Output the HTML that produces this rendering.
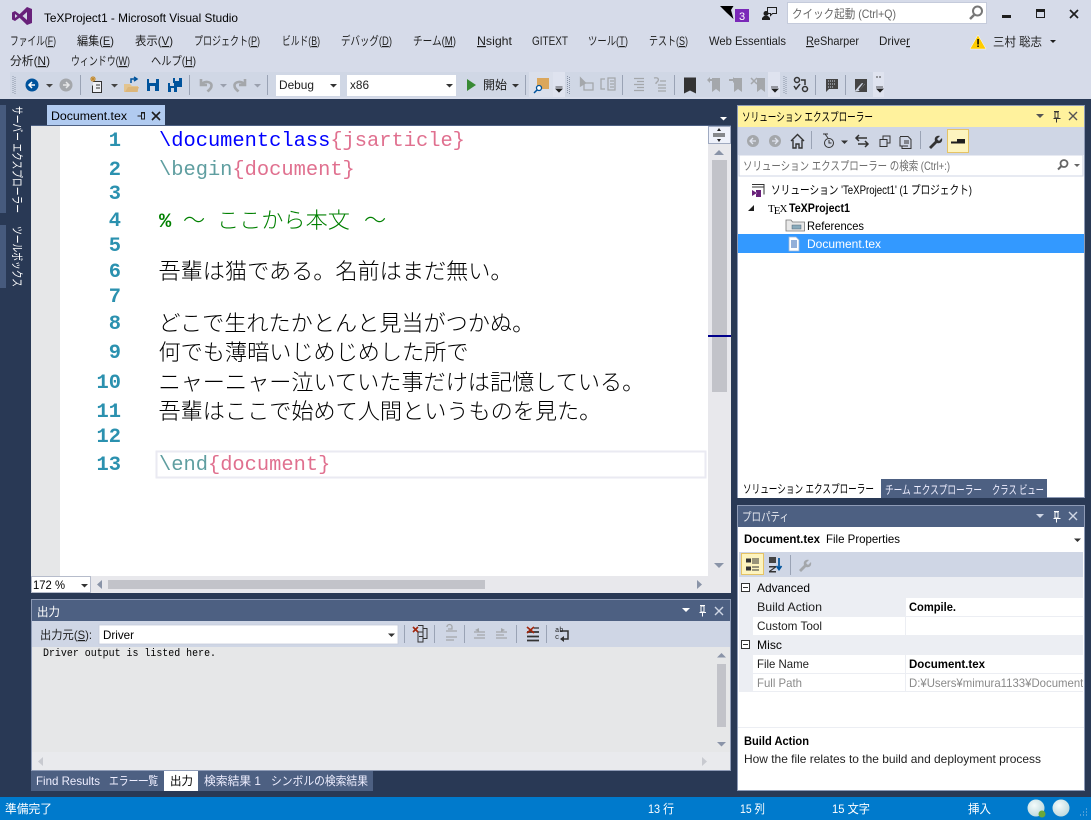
<!DOCTYPE html>
<html lang="ja"><head><meta charset="utf-8"><title>TeXProject1 - Microsoft Visual Studio</title>
<style>
html,body{margin:0;padding:0;background:#293955;width:1091px;height:820px;overflow:hidden}
svg{display:block}
text{font-family:"Liberation Sans","Noto Sans CJK JP",sans-serif;font-size:12px;fill:#1e1e1e;white-space:pre}
.w{fill:#fff}
.g{fill:#8a8a8a}
.b{font-weight:bold;fill:#000}
.k{fill:#000}
.m{font-family:"Liberation Mono","Noto Sans CJK JP",monospace;font-size:20.4px}
.c{font-family:"Noto Sans CJK JP",sans-serif;font-size:22.15px;fill:#000;font-weight:300}
.n{font-family:"Liberation Mono",monospace;font-size:20.4px;fill:#2b91af;text-anchor:end;font-weight:bold}
</style></head><body>
<svg width="1091" height="820" viewBox="0 0 1091 820" xmlns="http://www.w3.org/2000/svg">
<defs>
<radialGradient id="orb" cx="40%" cy="35%" r="70%"><stop offset="0" stop-color="#f4fbfb"/><stop offset="1" stop-color="#bcd8dc"/></radialGradient>
</defs>
<!-- chrome -->
<rect width="1091" height="99" fill="#d6dbe9"/>
<rect y="99" width="1091" height="698" fill="#293955"/>
<rect y="797" width="1091" height="23" fill="#007acc"/>
<!-- VS logo -->
<path d="M27 7 L32 9 V23 L27 25 L19.500 17.800 L15 21 L12 19.500 V12.500 L15 11 L19.500 14.200Z M15 14 V18 L17.500 16Z M27 12 L22.500 16 L27 20Z" fill="#68217a" fill-rule="evenodd"/>
<text x="44" y="22" textLength="194" lengthAdjust="spacingAndGlyphs" class="k">TeXProject1 - Microsoft Visual Studio</text>
<!-- title right -->
<path d="M720 6 H733.500 L731 10 L733.500 19 L727 13Z" fill="#000"/>
<rect x="735" y="9" width="14" height="13" fill="#7a28b8"/><text x="739" y="20" class="w" style="font-size:11px">3</text>
<circle cx="766" cy="13.500" r="2.500" fill="#1e1e1e"/><path d="M764 16 h4 l2 2 v2 h-8 v-2z" fill="#1e1e1e"/>
<path d="M767.500 7.500 h9 v6 h-4 l-2 2 v-2 h-3z" fill="none" stroke="#1e1e1e"/>
<rect x="787.500" y="2.500" width="199" height="21" fill="#fff" stroke="#c5cbdb"/>
<text x="792" y="18" textLength="104" lengthAdjust="spacingAndGlyphs" style="fill:#666">クイック起動 (Ctrl+Q)</text>
<circle cx="977.500" cy="11" r="4.500" fill="none" stroke="#777" stroke-width="2"/><path d="M974 15 L970 19" stroke="#777" stroke-width="2.500"/>
<rect x="1002" y="15" width="9" height="3" fill="#1e1e1e"/>
<rect x="1036.500" y="9.500" width="8" height="8" fill="none" stroke="#1e1e1e"/><rect x="1036" y="9" width="9" height="3" fill="#1e1e1e"/>
<path d="M1070 10 L1078 18 M1078 10 L1070 18" stroke="#1e1e1e" stroke-width="1.700"/>
<!-- menu row 1 -->
<text x="10" y="45" textLength="46" lengthAdjust="spacingAndGlyphs">ファイル(<tspan text-decoration="underline">F</tspan>)</text>
<text x="77" y="45" textLength="37" lengthAdjust="spacingAndGlyphs">編集(<tspan text-decoration="underline">E</tspan>)</text>
<text x="135" y="45" textLength="38" lengthAdjust="spacingAndGlyphs">表示(<tspan text-decoration="underline">V</tspan>)</text>
<text x="194" y="45" textLength="66" lengthAdjust="spacingAndGlyphs">プロジェクト(<tspan text-decoration="underline">P</tspan>)</text>
<text x="282" y="45" textLength="38" lengthAdjust="spacingAndGlyphs">ビルド(<tspan text-decoration="underline">B</tspan>)</text>
<text x="341" y="45" textLength="51" lengthAdjust="spacingAndGlyphs">デバッグ(<tspan text-decoration="underline">D</tspan>)</text>
<text x="413" y="45" textLength="43" lengthAdjust="spacingAndGlyphs">チーム(<tspan text-decoration="underline">M</tspan>)</text>
<text x="477" y="45" textLength="35" lengthAdjust="spacingAndGlyphs"><tspan text-decoration="underline">N</tspan>sight</text>
<text x="532" y="45" textLength="36" lengthAdjust="spacingAndGlyphs">GITEXT</text>
<text x="588" y="45" textLength="40" lengthAdjust="spacingAndGlyphs">ツール(<tspan text-decoration="underline">T</tspan>)</text>
<text x="649" y="45" textLength="39" lengthAdjust="spacingAndGlyphs">テスト(<tspan text-decoration="underline">S</tspan>)</text>
<text x="709" y="45" textLength="77" lengthAdjust="spacingAndGlyphs">Web Essentials</text>
<text x="806" y="45" textLength="53" lengthAdjust="spacingAndGlyphs"><tspan text-decoration="underline">R</tspan>eSharper</text>
<text x="879" y="45" textLength="31" lengthAdjust="spacingAndGlyphs">Drive<tspan text-decoration="underline">r</tspan></text>
<path d="M978 35 L986 49 H970Z" fill="#ffcc00" stroke="#fff" stroke-width=".5"/><rect x="977.300" y="39" width="1.500" height="5.500" fill="#000"/><rect x="977.300" y="45.500" width="1.500" height="1.500" fill="#000"/>
<text x="993" y="46" textLength="49" lengthAdjust="spacingAndGlyphs">三村 聡志</text>
<path d="M1050 40 h6 l-3 3z" fill="#1e1e1e"/>
<!-- menu row 2 -->
<text x="10" y="65" textLength="40" lengthAdjust="spacingAndGlyphs">分析(<tspan text-decoration="underline">N</tspan>)</text>
<text x="71" y="65" textLength="59" lengthAdjust="spacingAndGlyphs">ウィンドウ(<tspan text-decoration="underline">W</tspan>)</text>
<text x="151" y="65" textLength="45" lengthAdjust="spacingAndGlyphs">ヘルプ(<tspan text-decoration="underline">H</tspan>)</text>
<!-- toolbar -->
<rect x="10" y="72" width="543" height="25" fill="#d0d7e5"/>
<rect x="553" y="72" width="12" height="25" fill="#dfe3ef"/>
<rect x="565" y="72" width="203" height="25" fill="#d0d7e5"/>
<rect x="768" y="72" width="12" height="25" fill="#dfe3ef"/>
<rect x="780" y="72" width="93" height="25" fill="#d0d7e5"/>
<rect x="873" y="72" width="11" height="25" fill="#dfe3ef"/>
<path d="M13 76v18M15 77v17" stroke="#8a94a8" stroke-dasharray="1 1"/>
<path d="M567.500 76v18M569.500 77v17M784 76v18M786 77v17" stroke="#8a94a8" stroke-dasharray="1 1"/>
<circle cx="32" cy="85" r="6.500" fill="#00539c"/><path d="M29 85h6M32 82l-3 3 3 3" stroke="#fff" stroke-width="1.500" fill="none"/>
<path d="M46 84h7l-3.500 3.500z" fill="#444"/>
<circle cx="66" cy="85" r="6.500" fill="#a4a7ab"/><path d="M63 85h6M66 82l3 3-3 3" stroke="#e6e7e8" stroke-width="1.500" fill="none"/>
<path d="M80.500 75v20M189.500 75v20M267.500 75v20M525.500 75v20M622.500 75v20M674.500 75v20M815.500 75v20M845.500 75v20" stroke="#9aa3b5"/>
<!-- new project -->
<path d="M93.500 81.500h8v11h-9v-7" fill="#eef0f5" stroke="#333"/><path d="M96 85h4M96 88h4" stroke="#333"/><path d="M93 76v6M90 79h6M91 77l4 4M95 77l-4 4" stroke="#c48a2c"/>
<path d="M111 84h7l-3.500 3.500z" fill="#444"/>
<!-- open -->
<path d="M124 84h6l2 2h6v6h-14z" fill="#e3c48f"/><path d="M125 92l3-5h11l-2 5z" fill="#dcb67a"/><path d="M131 83v-4h5M134 77l3 2-3 2" stroke="#00539c" fill="none" stroke-width="1.500"/>
<!-- save -->
<path d="M147 79h12v12h-12z" fill="#00539c"/><rect x="149" y="79" width="7" height="4" fill="#d0d7e5"/><rect x="150" y="86" width="5" height="5" fill="#d0d7e5"/>
<path d="M168 83h9v9h-9z" fill="#00539c"/><rect x="170" y="83" width="4" height="3" fill="#d0d7e5"/><rect x="171" y="88" width="3" height="4" fill="#d0d7e5"/>
<path d="M173 78h9v9h-5v-4h-4z" fill="#00539c"/><rect x="175" y="78" width="4" height="3" fill="#d0d7e5"/>
<!-- undo redo -->
<path d="M201 79v6h6M201.500 84.500c3-4 10-3 10 1 0 3-2 4-4 6" fill="none" stroke="#a4a7ab" stroke-width="2.600"/>
<path d="M220 84h7l-3.500 3.500z" fill="#9aa0ad"/>
<path d="M245 79v6h-6M244.500 84.500c-3-4-10-3-10 1 0 3 2 4 4 6" fill="none" stroke="#a4a7ab" stroke-width="2.600"/>
<path d="M254 84h7l-3.500 3.500z" fill="#9aa0ad"/>
<!-- combos -->
<rect x="276" y="75" width="64" height="21" fill="#fff"/><text x="279" y="89" textLength="35" lengthAdjust="spacingAndGlyphs">Debug</text><path d="M330 84h7l-3.500 3.500z" fill="#333"/>
<rect x="347" y="75" width="109" height="21" fill="#fff"/><text x="350" y="89" textLength="19" lengthAdjust="spacingAndGlyphs">x86</text><path d="M446 84h7l-3.500 3.500z" fill="#333"/>
<path d="M467 79 L476 85 L467 91Z" fill="#388a34"/>
<text x="483" y="89" textLength="24" lengthAdjust="spacingAndGlyphs">開始</text>
<path d="M512 84h7l-3.500 3.500z" fill="#333"/>
<rect x="529" y="72" width="24" height="25" fill="#dadfeb"/>
<rect x="537" y="78" width="12" height="11" fill="#dba75c"/>
<circle cx="539" cy="88" r="2.500" fill="#fff" stroke="#00539c" stroke-width="1.300"/><path d="M537 90l-3 3" stroke="#00539c" stroke-width="1.500"/>
<path d="M555.500 87h7M556 89h6l-3 3z" stroke="#1e1e1e" fill="#1e1e1e" stroke-width=".8"/>
<!-- disabled icons -->
<g fill="none" stroke="#a4a7ab" stroke-width="1.300">
<path d="M584 83h9v7h-9z"/><path d="M580.500 78v8l5-3z" fill="#a4a7ab"/>
<path d="M605 79h-4v10h4M608 78h7v12h-7zM610 81h4M610 84h4M610 87h4"/>
<path d="M634 78.500h10M637 81.500h7M634 84.500h10M637 87.500h7M634 90.500h10"/>
<path d="M654 78c4-1 5 1 4 3l-2 2v1M660 81h6M658 85h8M658 88h8M658 91h8"/>
</g>
<path d="M684 77.500h12v16l-6-3-6 3z" fill="#333"/>
<g fill="#a4a7ab">
<path d="M712 78h8v14l-4-3-4 3zM707 80l3-3v2h2v2h-2v2z"/>
<path d="M734 78h8v14l-4-3-4 3zM729 79h4v-2l3 3-3 3v-2h-4z"/>
<path d="M757 78h8v14l-4-3-4 3z"/><path d="M751 78l6 6M757 78l-6 6" stroke="#a4a7ab" stroke-width="1.500"/>
</g>
<path d="M771 87h7M772 89h6l-3 3z" stroke="#1e1e1e" fill="#1e1e1e" stroke-width=".8"/>
<!-- right toolbar icons -->
<circle cx="797" cy="80" r="2.500" fill="none" stroke="#333" stroke-width="1.500"/><circle cx="805" cy="89" r="2.500" fill="none" stroke="#333" stroke-width="1.500"/>
<path d="M794 86l2 3 4-5M801 80h4v5" fill="none" stroke="#333" stroke-width="1.500"/>
<path d="M826 79h12v10h-9l-3 3z" fill="#444"/><path d="M828 81h8M828 84h8M828 87h6" stroke="#d0d7e5" stroke-dasharray="1 1"/>
<path d="M855 79h12v13h-12l0-4z" fill="#444"/><path d="M854 92l5-6 3-3 3 1-6 7z" fill="#d0d7e5"/><path d="M859 90l7-9" stroke="#444" stroke-width="1.500"/>
<path d="M877 76v2M880 76v2" stroke="#444"/>
<path d="M876 87h7M877 89h6l-3 3z" stroke="#1e1e1e" fill="#1e1e1e" stroke-width=".8"/>
<!-- left autohide -->
<rect x="0" y="105" width="6" height="108" fill="#465a7d"/>
<rect x="0" y="225" width="6" height="63" fill="#465a7d"/>
<text transform="translate(13,106) rotate(90)" x="0" y="0" textLength="107" lengthAdjust="spacingAndGlyphs" class="w">サーバー エクスプローラー</text>
<text transform="translate(13,226) rotate(90)" x="0" y="0" textLength="61" lengthAdjust="spacingAndGlyphs" class="w">ツールボックス</text>
<!-- doc tab -->
<rect x="47" y="105" width="118" height="21" fill="#b1cbf0"/>
<rect x="31" y="125" width="700" height="2" fill="#4d6082"/>
<text x="51" y="120" textLength="76" lengthAdjust="spacingAndGlyphs" class="k">Document.tex</text>
<path d="M137.500 116h4M141.500 113v6h3v-6zM141 112.500h4" fill="none" stroke="#1e1e1e"/>
<path d="M152 112l8 8M160 112l-8 8" stroke="#1e1e1e" stroke-width="1.600"/>
<path d="M720 117h7l-3.500 3.500z" fill="#fff"/>
<!-- editor -->
<rect x="31" y="126" width="677" height="450" fill="#fff"/>
<rect x="31" y="126" width="29" height="450" fill="#e6e7e8"/>
<rect x="156.500" y="451.500" width="549" height="26" fill="none" stroke="#eaeaf2" stroke-width="2"/>
<text x="121" y="146" class="n">1</text><text x="121" y="175" class="n">2</text><text x="121" y="199" class="n">3</text><text x="121" y="226" class="n">4</text><text x="121" y="251" class="n">5</text><text x="121" y="277" class="n">6</text><text x="121" y="302" class="n">7</text><text x="121" y="329" class="n">8</text><text x="121" y="358" class="n">9</text><text x="121" y="388" class="n">10</text><text x="121" y="417" class="n">11</text><text x="121" y="442" class="n">12</text><text x="121" y="470" class="n">13</text>
<text x="159" y="146" class="m" style="fill:#0000ff">\documentclass<tspan style="fill:#e0708f">{jsarticle}</tspan></text>
<text x="159" y="175" class="m" style="fill:#5f9ea0">\begin<tspan style="fill:#e0708f">{document}</tspan></text>
<text x="159" y="227" class="m" style="fill:#008000;font-weight:bold">%</text>
<text x="183" y="228" class="c" style="fill:#008000">～</text>
<text x="217" y="228" class="c" style="fill:#008000">ここから本文</text>
<text x="364" y="228" class="c" style="fill:#008000">～</text>
<text x="158.500" y="279" class="c">吾輩は猫である。名前はまだ無い。</text>
<text x="158.500" y="331" class="c">どこで生れたかとんと見当がつかぬ。</text>
<text x="158.500" y="360" class="c">何でも薄暗いじめじめした所で</text>
<text x="158.500" y="390" class="c">ニャーニャー泣いていた事だけは記憶している。</text>
<text x="158.500" y="419" class="c">吾輩はここで始めて人間というものを見た。</text>
<text x="159" y="470" class="m" style="fill:#5f9ea0">\end<tspan style="fill:#e0708f">{document}</tspan></text>
<!-- v scroll -->
<rect x="708" y="126" width="23" height="467" fill="#e8e8ec"/>
<rect x="708.500" y="126.500" width="22" height="17" fill="#eef1fa" stroke="#8c9ab5" stroke-width=".8"/>
<path d="M713 134h12M713 136h12" stroke="#1e1e1e"/><path d="M717 131h4l-2-3zM717 139h4l-2 3z" fill="#1e1e1e"/>
<path d="M714 155l5-5 5 5z" fill="#8a94a8"/>
<rect x="712" y="160" width="15" height="232" fill="#c2c3c9"/>
<rect x="708" y="335" width="23" height="2" fill="#00008b"/>
<path d="M714 563l5 5 5-5z" fill="#8a94a8"/>
<!-- h scroll -->
<rect x="31" y="576" width="700" height="17" fill="#e8e8ec"/>
<rect x="31.500" y="576.500" width="59" height="16" fill="#fff" stroke="#b6bccb"/>
<text x="33" y="589" textLength="32" lengthAdjust="spacingAndGlyphs" class="k">172 %</text>
<path d="M81 584h7l-3.500 3.500z" fill="#333"/>
<path d="M102 580l-5 4.500 5 4.500z" fill="#8a94a8"/>
<rect x="108" y="580" width="377" height="9" fill="#c2c3c9"/>
<path d="M697 580l5 4.500-5 4.500z" fill="#8a94a8"/>
<!-- output -->
<rect x="31.500" y="599.500" width="699" height="171" fill="#e6e7e8" stroke="#8e9bb6"/>
<rect x="32" y="600" width="698" height="21" fill="#4d6082"/>
<text x="37" y="616" textLength="23" lengthAdjust="spacingAndGlyphs" class="w">出力</text>
<path d="M682 608h8l-4 4z" fill="#fff"/><path d="M701 606v6h3v-6zM699.500 612.500h6.500M702.500 612.500v4M700 605.500h5" fill="none" stroke="#fff"/><path d="M715 607l8 8M723 607l-8 8" stroke="#cfd6e5" stroke-width="1.400"/>
<rect x="32" y="621" width="698" height="26" fill="#cfd6e5"/>
<text x="40" y="639" textLength="52" lengthAdjust="spacingAndGlyphs">出力元(<tspan text-decoration="underline">S</tspan>):</text>
<rect x="99" y="625" width="299" height="19" fill="#fff" stroke="#c5cbdb" stroke-width=".8"/>
<text x="103" y="639" textLength="31" lengthAdjust="spacingAndGlyphs" class="k">Driver</text>
<path d="M388 633.500h7l-3.500 3.500z" fill="#333"/>
<path d="M404.500 625v18M434.500 625v18M464.500 625v18M516.500 625v18M546.500 625v18" stroke="#9aa3b5"/>
<path d="M418 625.500h5v11h-4M423 628.500h4v10h-4M423 642v-10h-5v10h5z" fill="none" stroke="#333"/><path d="M413 627l5 5M418 627l-5 5" stroke="#a1260d" stroke-width="1.600"/>
<path d="M446 631h11M446 637h11M446 640h8" stroke="#a4a7ab" stroke-width="1.300"/><path d="M447 627a2.500 2.500 0 0 1 5 0v2h-4" fill="none" stroke="#a4a7ab" stroke-width="1.300"/>
<path d="M474 632h11M477 635h8M474 638h11" stroke="#a4a7ab" stroke-width="1.300"/><path d="M479 628l-4 2 4 2" fill="#a4a7ab"/>
<path d="M496 632h11M496 635h8M496 638h11" stroke="#a4a7ab" stroke-width="1.300"/><path d="M501 628l4 2-4 2" fill="#a4a7ab"/>
<path d="M527 632h12M527 636.500h12M527 640.500h12" stroke="#333" stroke-width="1.800"/><path d="M534 628h5" stroke="#333" stroke-width="1.300"/><path d="M527 627l7 6M534 627l-7 6" stroke="#a1260d" stroke-width="1.700"/>
<path d="M560 631h8v8h-7" fill="none" stroke="#333" stroke-width="1.500"/><path d="M564 636l-4 3 4 3z" fill="#333"/>
<text x="555" y="632" style="font-size:7px;font-family:'Liberation Mono'">ab</text><text x="555" y="639" style="font-size:7px;font-family:'Liberation Mono'">c</text>
<text x="43" y="656" class="k" style="font-family:'Liberation Mono',monospace;font-size:11px" textLength="173" lengthAdjust="spacingAndGlyphs">Driver output is listed here.</text>
<rect x="32" y="752" width="698" height="18" fill="#e9eaed"/>
<path d="M717 657.500l4.500-4.500 4.500 4.500z" fill="#8a94a8"/><rect x="717" y="664" width="9" height="63" fill="#c2c3c9"/><path d="M717 742l4.500 4.500 4.500-4.500z" fill="#8a94a8"/>
<path d="M43 757l-5 4.500 5 4.500z" fill="#c8cad0"/><path d="M702 757l5 4.500-5 4.500z" fill="#c8cad0"/>
<!-- bottom tabs -->
<rect x="31" y="771" width="342" height="20" fill="#4d6082"/>
<rect x="164" y="771" width="34" height="20" fill="#fff"/>
<text x="36" y="785" textLength="64" lengthAdjust="spacingAndGlyphs" style="fill:#eef">Find Results</text>
<text x="109" y="785" textLength="49" lengthAdjust="spacingAndGlyphs" style="fill:#eef">エラー一覧</text>
<text x="170" y="785" textLength="23" lengthAdjust="spacingAndGlyphs" class="k">出力</text>
<text x="204" y="785" textLength="57" lengthAdjust="spacingAndGlyphs" style="fill:#eef">検索結果 1</text>
<text x="271" y="785" textLength="97" lengthAdjust="spacingAndGlyphs" style="fill:#eef">シンボルの検索結果</text>
<!-- status -->
<text x="5" y="813" textLength="47" lengthAdjust="spacingAndGlyphs" class="w">準備完了</text>
<text x="648" y="813" textLength="26" lengthAdjust="spacingAndGlyphs" class="w">13 行</text>
<text x="740" y="813" textLength="25" lengthAdjust="spacingAndGlyphs" class="w">15 列</text>
<text x="832" y="813" textLength="38" lengthAdjust="spacingAndGlyphs" class="w">15 文字</text>
<text x="968" y="813" textLength="23" lengthAdjust="spacingAndGlyphs" class="w">挿入</text>
<circle cx="1036" cy="808" r="8.500" fill="url(#orb)"/><circle cx="1042" cy="814" r="3.500" fill="#6aa83a"/>
<circle cx="1061" cy="808" r="8.500" fill="url(#orb)"/>
<path d="M1086 815h1M1083 815h1M1086 812h1M1080 815h1M1083 812h1M1086 809h1" stroke="#9cc4e4"/>
<!-- solution explorer -->
<rect x="737.500" y="105.500" width="347" height="392" fill="#fff" stroke="#8e9bb6"/>
<rect x="738" y="106" width="346" height="21" fill="#fff29d"/>
<text x="742" y="121" textLength="131" lengthAdjust="spacingAndGlyphs" class="k">ソリューション エクスプローラー</text>
<path d="M1036 114h8l-4 4z" fill="#555"/><path d="M1055 112v6h3v-6zM1053.500 118.500h7M1056.500 118.500v4M1054 111.500h5" fill="none" stroke="#333"/><path d="M1069 112l8 8M1077 112l-8 8" stroke="#555" stroke-width="1.400"/>
<rect x="738" y="127" width="346" height="28" fill="#cfd6e5"/>
<circle cx="753" cy="141" r="6" fill="#a4a7ab"/><path d="M750 141h6M753 138l-3 3 3 3" stroke="#dfe3ee" stroke-width="1.300" fill="none"/>
<circle cx="775" cy="141" r="6" fill="#a4a7ab"/><path d="M772 141h6M775 138l3 3-3 3" stroke="#dfe3ee" stroke-width="1.300" fill="none"/>
<path d="M791 141l6.500-6.500 6.500 6.500M793 140v8h3v-4h3v4h3v-8" fill="none" stroke="#333" stroke-width="1.400"/>
<path d="M811.500 131v18M920.500 131v18" stroke="#9aa3b5"/>
<circle cx="829" cy="143" r="4.500" fill="none" stroke="#333"/><path d="M829 140v3h2.500M823 134h5M825 134l3 4" stroke="#333" fill="none"/>
<path d="M841 140.500h7l-3.500 3.500z" fill="#333"/>
<path d="M857 138h10M859 135l-3 3 3 3M868 144h-10M865 141l3 3-3 3" fill="none" stroke="#333" stroke-width="1.500"/>
<path d="M880 139.500h7v7h-7zM883 139v-3h7v7h-3" fill="none" stroke="#333"/>
<path d="M900 136.500h8l3 3v9h-9v-3M900 137v9h8" fill="none" stroke="#333"/><path d="M904 141h5M904 143h5" stroke="#333"/>
<path d="M929 147l6-6c-1-3 1-6 5-5l-3 3 2 2 3-3c1 4-2 6-5 5l-6 6z" fill="#333"/>
<rect x="947.500" y="129.500" width="21" height="23" fill="#fdf4bf" stroke="#e5c365"/>
<path d="M951 142.500h14" stroke="#1e1e1e" stroke-width="2"/><path d="M957 139h8v3h-8z" fill="#1e1e1e"/>
<rect x="739" y="155" width="344" height="21" fill="#fff" stroke="#cfd6e5"/>
<text x="743" y="170" textLength="207" lengthAdjust="spacingAndGlyphs" style="fill:#6d6d6d">ソリューション エクスプローラー の検索 (Ctrl+:)</text>
<circle cx="1064" cy="163.500" r="3.500" fill="none" stroke="#666" stroke-width="1.800"/><path d="M1061.500 166l-3.500 3.500" stroke="#666" stroke-width="2"/><path d="M1074 164h6l-3 3z" fill="#666"/>
<path d="M752 184.500h12v10" fill="none" stroke="#333"/><path d="M752 187h12" stroke="#333"/><path d="M752 190l5 3-5 3zM756 190v7h5v-7z" fill="#68217a"/>
<text x="771" y="194" textLength="201" lengthAdjust="spacingAndGlyphs" class="k">ソリューション 'TeXProject1' (1 プロジェクト)</text>
<path d="M748 211h6v-6z" fill="#1e1e1e"/>
<text x="768" y="212" style="font-family:'Liberation Serif',serif;font-size:11px" class="k">T<tspan dy="2" dx="-1">E</tspan><tspan dy="-2" dx="-1">X</tspan></text>
<text x="789" y="212" textLength="61" lengthAdjust="spacingAndGlyphs" class="k" style="font-weight:bold">TeXProject1</text>
<path d="M786 220h5l1.500 2h12v9h-18.500z" fill="#e8e8e8" stroke="#777" stroke-width=".8"/><rect x="792" y="225" width="9" height="4" fill="#8ab" stroke="#567" stroke-width=".5"/>
<text x="807" y="230" textLength="57" lengthAdjust="spacingAndGlyphs" class="k">References</text>
<rect x="738" y="234" width="346" height="19" fill="#3399ff"/>
<path d="M789 237h7l3 3v11h-10z" fill="#fff" stroke="#a0b8d8" stroke-width=".8"/><path d="M791 241h6M791 243h6M791 245h6M791 247h6" stroke="#2a62b0"/>
<text x="807" y="248" textLength="74" lengthAdjust="spacingAndGlyphs" class="w">Document.tex</text>
<!-- se tabs -->
<rect x="738" y="477" width="143" height="21" fill="#fff"/>
<rect x="881" y="479" width="166" height="19" fill="#4d6082"/>
<text x="743" y="493" textLength="131" lengthAdjust="spacingAndGlyphs" class="k">ソリューション エクスプローラー</text>
<text x="885" y="494" textLength="97" lengthAdjust="spacingAndGlyphs" style="fill:#eef">チーム エクスプローラー</text>
<text x="992" y="494" textLength="52" lengthAdjust="spacingAndGlyphs" style="fill:#eef">クラス ビュー</text>
<!-- properties -->
<rect x="737.500" y="505.500" width="347" height="285" fill="#fff" stroke="#8e9bb6"/>
<rect x="738" y="506" width="346" height="21" fill="#4d6082"/>
<text x="742" y="521" textLength="47" lengthAdjust="spacingAndGlyphs" style="fill:#e6e9f0">プロパティ</text>
<path d="M1036 514h8l-4 4z" fill="#cfd6e5"/><path d="M1055 512v6h3v-6zM1053.500 518.500h7M1056.500 518.500v4M1054 511.500h5" fill="none" stroke="#fff"/><path d="M1069 512l8 8M1077 512l-8 8" stroke="#cfd6e5" stroke-width="1.400"/>
<text x="744" y="543" textLength="76" lengthAdjust="spacingAndGlyphs" class="k" style="font-weight:bold">Document.tex</text>
<text x="826" y="543" textLength="74" lengthAdjust="spacingAndGlyphs" class="k">File Properties</text>
<path d="M1074 538.500h7l-3.500 3.500z" fill="#333"/>
<rect x="739" y="552" width="344" height="25" fill="#cfd6e5"/>
<rect x="741.500" y="553.500" width="22" height="21" fill="#fdf4bf" stroke="#e5c365"/>
<path d="M746 558.500h5v4h-5zM746 566.500h5v4h-5z" fill="#333"/><path d="M752 559h7M752 561h7M752 563h7M752 567h7M752 570h7" stroke="#333"/>
<path d="M769 557h7v6h-7z" fill="#444"/><path d="M769 566h7v1.500l-5 3.500h5v1.500h-7v-1.500l5-3.500h-5z" fill="#333"/>
<path d="M779 558v11M776.500 566l2.500 3.500 2.500-3.500" fill="none" stroke="#00539c" stroke-width="1.700"/>
<path d="M790.500 555v20" stroke="#9aa3b5"/>
<path d="M799 570l5-5c-1-3 1-6 5-5l-3 3 2 2 3-3c1 4-2 6-5 5l-5 5z" fill="#a4a7ab"/>
<rect x="739" y="577" width="344" height="115" fill="#fff"/>
<rect x="739" y="577" width="14" height="115" fill="#eceef3"/>
<rect x="739" y="577" width="344" height="21" fill="#eceef3"/>
<rect x="739" y="635" width="344" height="20" fill="#eceef3"/>
<rect x="753" y="598" width="152" height="19" fill="#eceef3"/>
<path d="M753 635.500h330M753 616.500h330M753 673.500h330M753 691.500h330M905.500 598v37M905.500 655v37" stroke="#eceef3"/>
<rect x="741.500" y="583.500" width="8" height="8" fill="#fff" stroke="#333"/><path d="M743 587.500h5" stroke="#333"/>
<rect x="741.500" y="640.500" width="8" height="8" fill="#fff" stroke="#333"/><path d="M743 644.500h5" stroke="#333"/>
<text x="757" y="592" textLength="53" lengthAdjust="spacingAndGlyphs" class="k">Advanced</text>
<text x="757" y="611" textLength="65" lengthAdjust="spacingAndGlyphs">Build Action</text>
<text x="909" y="611" textLength="47" lengthAdjust="spacingAndGlyphs" class="b">Compile.</text>
<text x="757" y="630" textLength="65" lengthAdjust="spacingAndGlyphs">Custom Tool</text>
<text x="757" y="649" textLength="25" lengthAdjust="spacingAndGlyphs" class="k">Misc</text>
<text x="757" y="668" textLength="52" lengthAdjust="spacingAndGlyphs">File Name</text>
<text x="909" y="668" textLength="76" lengthAdjust="spacingAndGlyphs" class="b">Document.tex</text>
<text x="757" y="687" textLength="45" lengthAdjust="spacingAndGlyphs" class="g">Full Path</text>
<svg x="905" y="675" width="178" height="16"><text x="4" y="12" textLength="180" lengthAdjust="spacingAndGlyphs" class="g">D:¥Users¥mimura1133¥Documents</text></svg>
<path d="M738 727.500h346" stroke="#eceef3"/>
<text x="744" y="745" textLength="65" lengthAdjust="spacingAndGlyphs" class="b">Build Action</text>
<text x="744" y="763" textLength="297" lengthAdjust="spacingAndGlyphs">How the file relates to the build and deployment process</text>
</svg>
</body></html>
